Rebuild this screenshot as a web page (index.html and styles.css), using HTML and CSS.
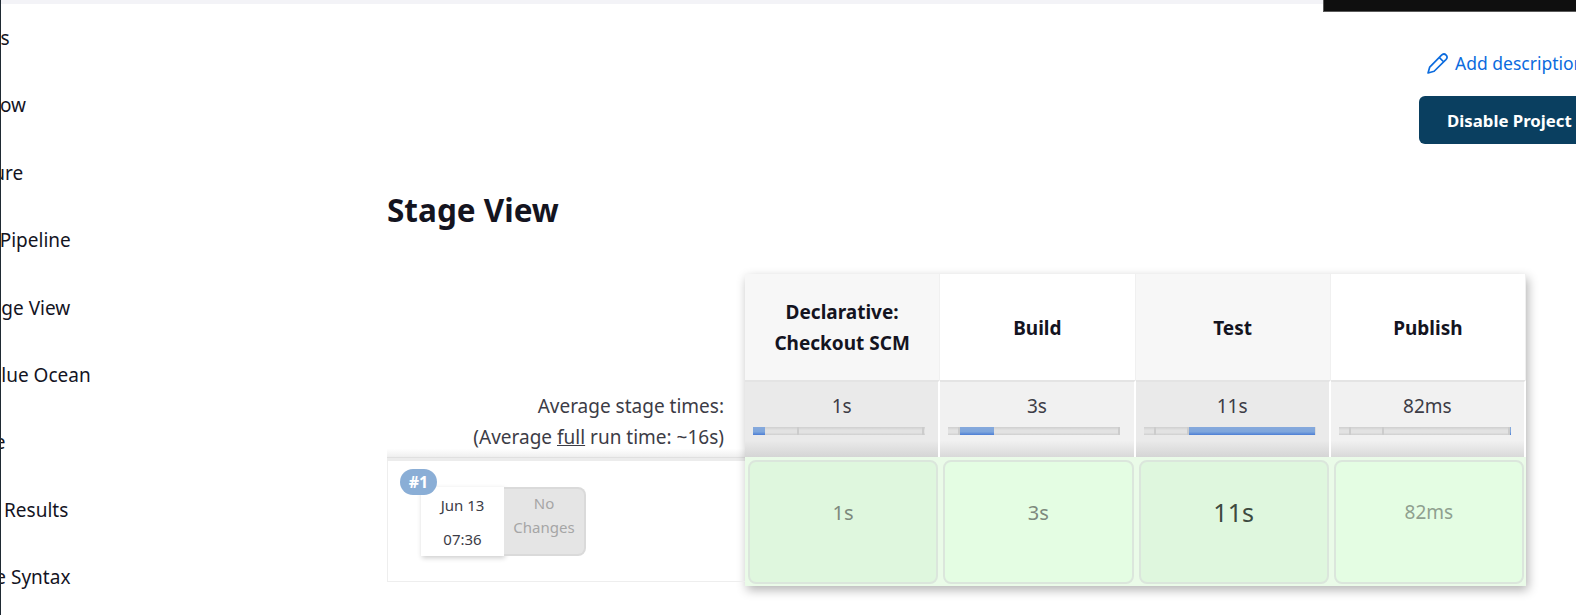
FILE: index.html
```html
<!DOCTYPE html>
<html lang="en">
<head>
    <meta charset="UTF-8">
    <meta name="viewport" content="width=device-width, initial-scale=1.0">
    <title>Stage View</title>
    <link rel="stylesheet" href="styles.css">
</head>
<body>
    <div class="top-bar">
        <div class="top-strip"></div>
        <div class="top-box"></div>
    </div>

    <div class="page">
        <ul class="side-nav">
            <li class="nudge-left">Changes</li>
            <li>Build Now</li>
            <li>Configure</li>
            <li class="nudge-right">Delete Pipeline</li>
            <li class="nudge-right">Full Stage View</li>
            <li>Open Blue Ocean</li>
            <li class="nudge-left">Rename</li>
            <li class="nudge-far">Pipeline Results</li>
            <li>Pipeline Syntax</li>
        </ul>

        <main class="content">
            <div class="actions">
                <a class="add-link" href="#">
                    <svg class="pencil" viewBox="0 0 20 20" width="21" height="21" aria-hidden="true">
                        <path d="M1 19 L2.6 13.4 L13.6 2.2 C15 0.8 17 0.8 18.2 2 C19.4 3.2 19.2 5 18 6.3 L6.8 17.4 Z M11.6 4.2 L16 8.6" fill="none" stroke="currentColor" stroke-width="1.6" stroke-linejoin="round"/>
                    </svg>
                    Add description
                </a>
                <button class="disable-btn">Disable Project</button>
            </div>

            <h2 class="title">Stage View</h2>

            <div class="stage-view">
                <div class="run-col">
                    <div class="averages">
                        <p>Average stage times:</p>
                        <p>(Average <u>full</u> run time: ~16s)</p>
                    </div>
                    <div class="run-row">
                        <span class="run-badge">#1</span>
                        <div class="run-date">
                            <span>Jun 13</span>
                            <span>07:36</span>
                        </div>
                        <div class="run-changes">No Changes</div>
                    </div>
                </div>

                <div class="stage-table">
                    <div class="head odd">Declarative: Checkout SCM</div>
                    <div class="head">Build</div>
                    <div class="head odd">Test</div>
                    <div class="head">Publish</div>

                    <div class="avg odd">
                        <span>1s</span>
                        <div class="bar">
                            <i class="on" style="width: 7%"></i><i style="width: 19.6%"></i><i style="width: 73%"></i><i class="last" style="width: 0.4%"></i>
                        </div>
                    </div>
                    <div class="avg">
                        <span>3s</span>
                        <div class="bar">
                            <i style="width: 7%"></i><i class="on" style="width: 19.6%"></i><i style="width: 73%"></i><i class="last" style="width: 0.4%"></i>
                        </div>
                    </div>
                    <div class="avg odd">
                        <span>11s</span>
                        <div class="bar">
                            <i style="width: 7%"></i><i style="width: 19.6%"></i><i class="on" style="width: 73%"></i><i class="last" style="width: 0.4%"></i>
                        </div>
                    </div>
                    <div class="avg">
                        <span>82ms</span>
                        <div class="bar">
                            <i style="width: 7%"></i><i style="width: 19.6%"></i><i style="width: 73%"></i><i class="on last" style="width: 0.4%"></i>
                        </div>
                    </div>

                    <div class="result odd"><div class="box faint">1s</div></div>
                    <div class="result"><div class="box faint">3s</div></div>
                    <div class="result odd"><div class="box big">11s</div></div>
                    <div class="result"><div class="box fainter">82ms</div></div>
                </div>
            </div>
        </main>
    </div>
</body>
</html>
```

FILE: styles.css
```css
* {
    box-sizing: border-box;
}

html, body {
    height: 100%;
}

body {
    margin: 0;
    overflow: hidden;
    background-color: white;
    border-left: 1px solid #1f2a33;
    font-family: "Noto Sans", "Open Sans", Arial, sans-serif;
    color: #14141f;
}

.top-bar {
    display: flex;
    align-items: flex-start;
    height: 4px;
    margin-left: -1px;
}

.top-strip {
    flex: 0 0 1323px;
    height: 4px;
    background-color: #f3f3f7;
}

.top-box {
    flex: 0 0 253px;
    height: 12px;
    background-color: #0f0f0f;
    border-bottom: 1px solid #5a5a5a;
    border-left: 1px solid #5a5a5a;
}

.page {
    display: flex;
}

/* text runs off the left edge of the window */
.side-nav {
    flex: 0 0 386px;
    margin: 0;
    padding: 17px 0 0 0;
    list-style: none;
    font-size: 19px;
    overflow: hidden;
}

.side-nav li {
    height: 67.4px;
    line-height: 34px;
    margin-left: -66px;
    white-space: nowrap;
}

.side-nav li.nudge-right {
    margin-left: -64px;
}

.side-nav li.nudge-left {
    margin-left: -69px;
}

.side-nav li.nudge-far {
    margin-left: -73px;
}

.content {
    flex: 0 0 auto;
    width: 1190px;
}

.actions {
    display: flex;
    flex-direction: column;
    margin-left: 1032px;
    padding-top: 46px;
}

.add-link {
    display: flex;
    align-items: center;
    gap: 7px;
    height: 26px;
    margin-left: 8px;
    color: #0b6bde;
    font-size: 17.5px;
    text-decoration: none;
    white-space: nowrap;
}

.pencil {
    flex: none;
}

.disable-btn {
    width: 180px;
    height: 48px;
    margin-top: 20px;
    padding: 0 0 0 28px;
    background-color: #0a3f60;
    color: white;
    border: none;
    border-radius: 6px;
    font-family: inherit;
    font-size: 16.8px;
    font-weight: 700;
    text-align: left;
    white-space: nowrap;
}

.title {
    margin: 44px 0 0 0;
    font-size: 31.5px;
    line-height: 44px;
    font-weight: 700;
}

.stage-view {
    display: flex;
    margin-top: 42px;
}

.run-col {
    flex: 0 0 358px;
    padding-top: 106px;
}

.averages {
    height: 81px;
    padding: 11px 21px 0 0;
    border-bottom: 3px solid #ececec;
    background: linear-gradient(to bottom, white 88%, #f0f0f0 98%, #d8d8d8);
    text-align: right;
    font-size: 19px;
    line-height: 31px;
    color: #3c3c46;
}

.averages p {
    margin: 0;
}

.run-row {
    display: flex;
    position: relative;
    height: 121px;
    padding: 26px 0 0 33px;
    border: 1px solid #eeeeee;
    border-top: none;
    border-right: none;
}

.run-badge {
    position: absolute;
    left: 12px;
    top: 8px;
    width: 37px;
    height: 26px;
    background-color: #8aaed6;
    color: white;
    border-radius: 13px;
    font-size: 16px;
    font-weight: 700;
    line-height: 26px;
    text-align: center;
}

.run-date {
    display: flex;
    flex-direction: column;
    gap: 10px;
    width: 83px;
    height: 69px;
    padding-top: 6px;
    background-color: white;
    box-shadow: 1px 2px 5px rgba(0, 0, 0, 0.2);
    text-align: center;
    font-size: 15px;
    line-height: 24px;
    color: #3c3c46;
}

.run-changes {
    width: 82px;
    height: 69px;
    padding-top: 2px;
    background-color: #e5e5e5;
    border: 2px solid #dadada;
    border-left: none;
    border-radius: 0 8px 8px 0;
    text-align: center;
    font-size: 15px;
    line-height: 24px;
    color: #a6a6a6;
}

.stage-table {
    display: grid;
    grid-template-columns: repeat(4, 195.25px);
    grid-template-rows: 106px 77px 129px;
    flex: none;
    box-shadow: 2px 4px 10px rgba(0, 0, 0, 0.3);
}

.head {
    display: flex;
    align-items: center;
    justify-content: center;
    padding: 2px 25px 0 25px;
    background-color: white;
    border-right: 1px solid #f0f0f0;
    text-align: center;
    font-size: 19px;
    font-weight: 700;
    line-height: 31px;
}

.head.odd {
    background-color: #f7f7f7;
}

.avg {
    padding: 9px 8px 0 8px;
    background: linear-gradient(to bottom, #f1f1f1 78%, #d9d9d9);
    border-top: 2px solid #e4e4e4;
    border-right: 2px solid white;
    text-align: center;
    font-size: 19px;
    line-height: 30px;
    color: #3c3c46;
}

.avg.odd {
    background: linear-gradient(to bottom, #eaeaea 78%, #d5d5d5);
}

.bar {
    display: flex;
    width: 172px;
    height: 8px;
    margin-top: 6px;
    background-color: #dcdcdc;
}

.bar i {
    display: block;
    height: 100%;
    border-right: 2px solid #cccccc;
    background: linear-gradient(to bottom, #cfcfcf, #e2e2e2 40%, #e2e2e2 70%, #cfcfcf);
}

.bar i.last {
    border-right: none;
}

.bar i.on {
    border-right: none;
    background: linear-gradient(to bottom, #86a9dc, #7ea6dc 60%, #4b7dd4);
}

.result {
    padding: 3px 2px 2px 3px;
    background-color: #eafbe8;
}

.box {
    display: flex;
    align-items: center;
    justify-content: center;
    height: 100%;
    padding-bottom: 20px;
    background-color: #e4fde3;
    border: 2px solid #dbe6dc;
    border-radius: 8px;
    font-size: 20px;
}

.odd .box {
    background-color: #dff7de;
}

.faint {
    color: #7d897d;
}

.fainter {
    font-size: 19px;
    color: #8fa08f;
}

.big {
    font-size: 25px;
    color: #3d4a3f;
}
```
